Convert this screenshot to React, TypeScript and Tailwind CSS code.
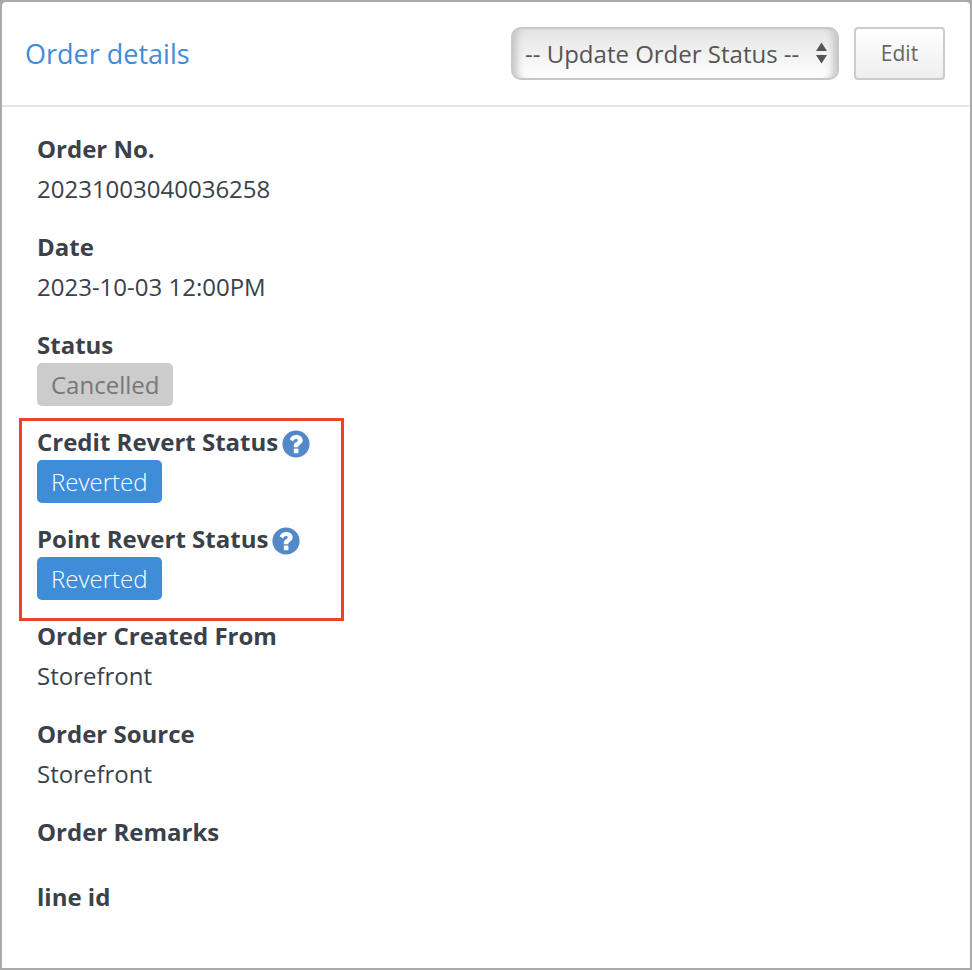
import type { ReactNode } from "react";

function HelpIcon({ label }: { label: string }) {
  return (
    <svg viewBox="0 0 28 28" className="mt-[3px] h-7 w-7" role="img" aria-label={label}>
      <circle cx="14" cy="14" r="13.6" fill="#5388c9" />
      <path
        d="M7.7 9.2C9.2 6.4 11.3 5 14.3 5C17.9 5 20.7 7.2 20.7 10.3C20.7 12.5 19.5 13.7 17.9 14.7C16.7 15.4 16.4 15.8 16.4 17.2H11.8C11.6 14.6 12.2 13.3 14.2 12.1C15.2 11.5 15.7 11.1 15.7 10.4C15.7 9.6 15 9.1 14 9.1C12.7 9.1 12 9.9 11.1 11.5Z"
        fill="#fff"
      />
      <rect x="11.8" y="18.6" width="4.6" height="4.6" fill="#fff" />
    </svg>
  );
}

function Field({ label, help, children }: { label: string; help?: string; children?: ReactNode }) {
  return (
    <div>
      <dt className="flex items-center gap-1 text-2xl/[36px] font-bold text-[#3a414b]">
        {label}
        {help && <HelpIcon label={help} />}
      </dt>
      <dd>{children}</dd>
    </div>
  );
}

function Value({ children }: { children: ReactNode }) {
  return <div className="text-2xl/[44px]">{children}</div>;
}

function Badge({ tone, children }: { tone: "muted" | "info"; children: ReactNode }) {
  const colors =
    tone === "muted" ? "bg-[#cccccc] text-[#777777] font-normal" : "bg-[#3f8cd9] text-white font-light";
  return (
    <div className={`w-fit rounded-[5px] px-[14px] text-2xl/[43px] ${colors}`}>{children}</div>
  );
}

export default function App() {
  return (
    <main className="min-h-screen bg-[#aaaaaa] p-[2px] font-['Open_Sans','Noto_Sans',sans-serif] text-[#3a414b]">
      <section className="min-h-[calc(100vh-4px)] rounded-t-[4px] bg-white">
        <header className="flex items-center justify-between border-b-2 border-[#e6e6e6] py-[25px] pr-[25px] pl-[23px]">
          <h1 className="text-[27px]/[40px] text-[#3f8cd9]">Order details</h1>
          <div className="flex gap-[15px]">
            <div className="relative">
              <select
                aria-label="Update order status"
                className="h-[53px] w-[328px] appearance-none rounded-[10px] border-2 border-[#c8c8c8] bg-linear-to-b from-[#e4e4e4] to-white pt-px pr-8 pl-3 text-2xl text-[#555555] shadow-[inset_9px_0_7px_-5px_#c6c6c6,inset_-9px_0_7px_-5px_#c6c6c6]"
              >
                <option>-- Update Order Status --</option>
              </select>
              <svg
                viewBox="0 0 11 22"
                aria-hidden="true"
                className="pointer-events-none absolute top-[15px] right-[12px] h-[22px] w-[11px]"
              >
                <path d="M5.5 0.5L11 9H0ZM0 13H11L5.5 21.5Z" fill="#555" />
              </svg>
            </div>
            <button
              type="button"
              className="h-[53px] w-[91px] rounded-[4px] border-2 border-[#cccccc] bg-linear-to-b from-white to-[#eeeeee] pt-px text-[21px] text-[#666666]"
            >
              Edit
            </button>
          </div>
        </header>

        <dl className="flex flex-col gap-[18px] px-[35px] pt-6 pb-10">
          <Field label="Order No.">
            <Value>20231003040036258</Value>
          </Field>
          <Field label="Date">
            <Value>2023-10-03 12:00PM</Value>
          </Field>
          <Field label="Status">
            <Badge tone="muted">Cancelled</Badge>
          </Field>
          <div className="relative flex w-[288px] flex-col gap-[18px]">
            <Field label="Credit Revert Status" help="About credit revert status">
              <Badge tone="info">Reverted</Badge>
            </Field>
            <Field label="Point Revert Status" help="About point revert status">
              <Badge tone="info">Reverted</Badge>
            </Field>
            <div className="pointer-events-none absolute -top-[6px] -right-[19px] -bottom-[21px] -left-[18px] border-3 border-[#ec4429]" />
          </div>
          <Field label="Order Created From">
            <Value>Storefront</Value>
          </Field>
          <Field label="Order Source">
            <Value>Storefront</Value>
          </Field>
          <div className="flex flex-col gap-[29px]">
            <Field label="Order Remarks" />
            <Field label="line id" />
          </div>
        </dl>
      </section>
    </main>
  );
}
